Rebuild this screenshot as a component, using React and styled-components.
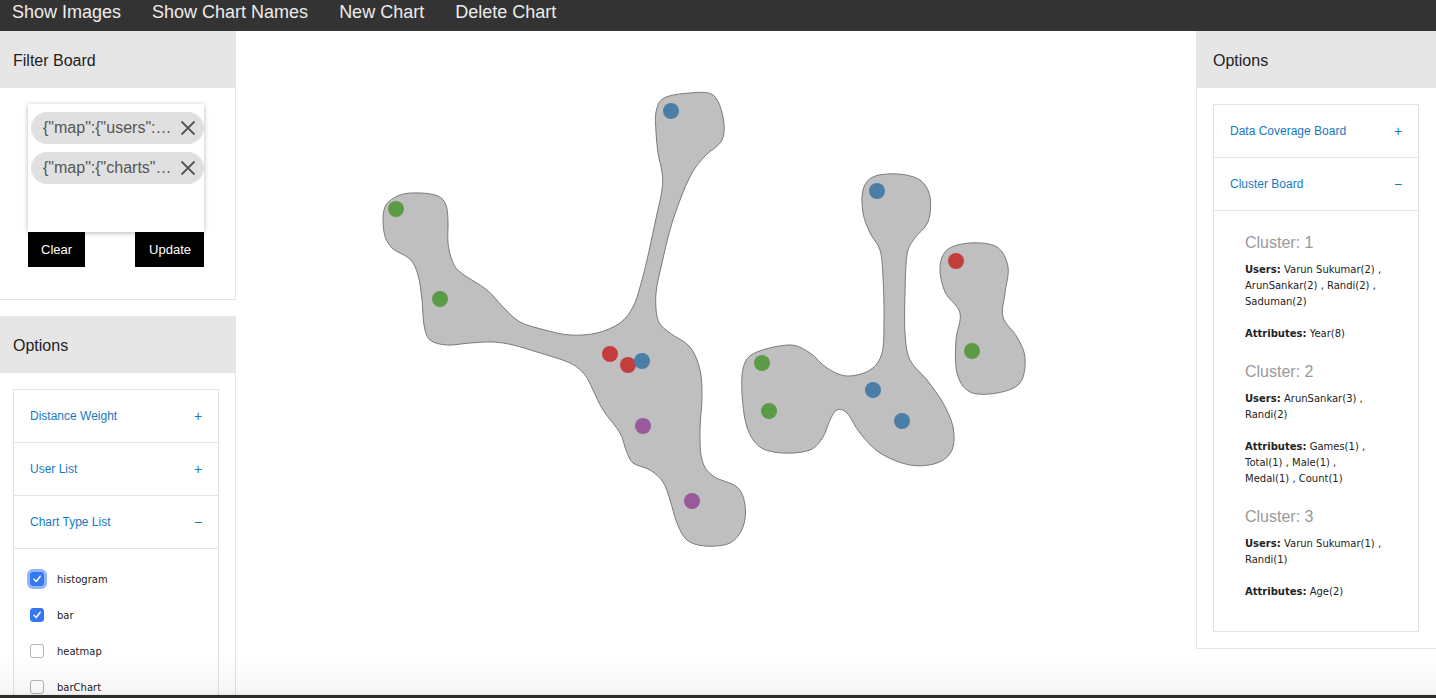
import React from 'react';
import styled, { createGlobalStyle } from 'styled-components';

const GlobalStyle = createGlobalStyle`
  html, body { margin: 0; padding: 0; overflow: hidden; background: #fff; }
  * { box-sizing: border-box; }
`;

const Page = styled.div`
  width: 100%;
  height: 100vh;
  display: flex;
  flex-direction: column;
  overflow: hidden;
  font-family: "Liberation Sans", Arial, sans-serif;
  color: #222;
`;

const NavBar = styled.nav`
  height: 31px;
  flex-shrink: 0;
  background: #333333;
  display: flex;
  align-items: flex-start;
  padding-left: 12px;
  gap: 31px;
`;

const NavItem = styled.a`
  color: #ececec;
  font-size: 18px;
  line-height: 25px;
  cursor: pointer;
`;

const Main = styled.div`
  flex: 1;
  min-height: 0;
  display: grid;
  grid-template-columns: 236px 1fr 240px;
`;

const SidePanel = styled.aside`
  display: flex;
  flex-direction: column;
  gap: 16px;
  min-height: 0;
`;

const Card = styled.section`
  display: flex;
  flex-direction: column;
  flex-shrink: 0;
  ${(p) => (p.$grow ? 'flex: 1; min-height: 0;' : '')}
`;

const CardHeader = styled.div`
  height: 57px;
  flex-shrink: 0;
  background: #e6e6e6;
  display: flex;
  align-items: center;
  padding-top: 2px;
  padding-left: ${(p) => (p.$side === 'right' ? '17px' : '13px')};
  font-size: 16px;
  color: #222;
`;

const CardBody = styled.div`
  background: #fff;
  border-bottom: 1px solid #e4e4e4;
  ${(p) => (p.$side === 'right' ? 'border-left: 1px solid #e4e4e4;' : 'border-right: 1px solid #e4e4e4;')}
  padding: ${(p) => p.$pad};
  ${(p) => (p.$grow ? 'flex: 1; min-height: 0; overflow: hidden;' : '')}
`;

const FilterBox = styled.div`
  height: 128px;
  background: #fff;
  box-shadow: 0 1px 5px rgba(0, 0, 0, 0.28);
  padding: 8px 0 0 3px;
  display: flex;
  flex-direction: column;
  gap: 8px;
`;

const Chip = styled.div`
  height: 32px;
  border-radius: 16px;
  background: #e0e0e0;
  display: flex;
  align-items: center;
  gap: 6px;
  padding: 0 8px 0 12px;
  font-size: 16px;
  color: #555;
`;

const ChipText = styled.span`
  flex: 1;
  min-width: 0;
  overflow: hidden;
  white-space: nowrap;
  text-overflow: ellipsis;
`;

const ChipClose = styled.svg`
  width: 16px;
  height: 16px;
  flex-shrink: 0;
`;

const ButtonRow = styled.div`
  display: flex;
  justify-content: space-between;
`;

const ActionButton = styled.button`
  height: 35px;
  border: none;
  background: #000;
  color: #fff;
  font-family: "Liberation Sans", Arial, sans-serif;
  font-size: 13px;
  padding: 0 13px 0 ${(p) => (p.$wide ? '14px' : '13px')};
  cursor: pointer;
`;

const Accordion = styled.div`
  border: 1px solid #e4e4e4;
`;

const AccordionRow = styled.div`
  height: 53px;
  border-bottom: 1px solid #e4e4e4;
  display: flex;
  align-items: center;
  justify-content: space-between;
  padding: 0 15px 0 16px;
  font-size: 12px;
  color: #1579c4;
  cursor: pointer;
`;

const AccordionSign = styled.span`
  font-size: 14px;
  color: #1579c4;
  width: 10px;
  text-align: center;
`;

const CheckList = styled.div`
  padding: 12px 16px 0;
`;

const CheckRow = styled.label`
  height: 36px;
  display: flex;
  align-items: center;
  gap: 13px;
  font-family: "DejaVu Sans", Verdana, sans-serif;
  font-size: 10px;
  color: #222;
`;

const CheckBox = styled.span`
  width: 14px;
  height: 14px;
  border-radius: 3px;
  flex-shrink: 0;
  display: flex;
  align-items: center;
  justify-content: center;
  background: ${(p) => (p.$checked ? '#3478f6' : '#fff')};
  border: 1px solid ${(p) => (p.$checked ? '#3478f6' : '#b5b5b5')};
  box-shadow: ${(p) => (p.$focus ? '0 0 0 3px rgba(52, 120, 246, 0.55)' : 'none')};
`;

const Canvas = styled.div`
  position: relative;
  background: #fff;
  min-height: 0;
  overflow: hidden;
`;

const ClusterSvg = styled.svg`
  display: block;
  width: 100%;
  height: 100%;
`;

const ClusterContent = styled.div`
  padding: 23px 35px 10px 31px;
`;

const ClusterBlock = styled.div`
  padding-bottom: 5px;
`;

const ClusterTitle = styled.div`
  font-size: 16px;
  line-height: 18px;
  color: #999;
  margin-bottom: 10px;
`;

const ClusterLine = styled.p`
  margin: 0 0 16px;
  font-family: "DejaVu Sans", Verdana, sans-serif;
  font-size: 10px;
  line-height: 16px;
  color: #222;
  b { font-weight: bold; }
`;

const WindowEdge = styled.div`
  position: fixed;
  left: 0;
  right: 0;
  bottom: 0;
  height: 44px;
  pointer-events: none;
  background: linear-gradient(to bottom, rgba(0, 0, 0, 0) 0%, rgba(0, 0, 0, 0.035) 80%, rgba(0, 0, 0, 0.06) 92%, #2b2b27 93%, #2b2b27 100%);
`;

function smoothPath(pts) {
  const n = pts.length;
  let d = `M${pts[0][0]},${pts[0][1]}`;
  for (let i = 0; i < n; i++) {
    const p0 = pts[(i - 1 + n) % n];
    const p1 = pts[i];
    const p2 = pts[(i + 1) % n];
    const p3 = pts[(i + 2) % n];
    const c1 = [p1[0] + (p2[0] - p0[0]) / 6, p1[1] + (p2[1] - p0[1]) / 6];
    const c2 = [p2[0] - (p3[0] - p1[0]) / 6, p2[1] - (p3[1] - p1[1]) / 6];
    d += ` C${c1[0].toFixed(1)},${c1[1].toFixed(1)} ${c2[0].toFixed(1)},${c2[1].toFixed(1)} ${p2[0]},${p2[1]}`;
  }
  return d + ' Z';
}

const blobA = [
  [656, 112], [664, 98], [690, 93], [713, 95], [723, 117], [722, 140], [705, 156], [692, 173], [680, 200],
  [670, 230], [662, 263], [656, 293], [658, 320], [670, 333], [690, 347], [700, 370], [702, 397], [700, 430],
  [702, 460], [713, 476], [737, 487], [745, 505], [743, 527], [730, 543], [705, 546], [687, 540], [677, 523],
  [670, 500], [663, 482], [650, 470], [633, 463], [626, 450], [620, 433], [603, 410], [593, 390], [585, 375],
  [570, 363], [537, 352], [513, 345], [493, 342], [470, 343], [447, 345], [430, 340], [424, 325], [422, 300],
  [418, 275], [410, 259], [392, 248], [384, 232], [385, 207], [400, 195], [420, 193], [438, 196], [446, 205],
  [448, 222], [448, 243], [452, 260], [460, 272], [487, 290], [503, 307], [520, 322], [545, 330], [570, 335],
  [597, 333], [620, 323], [633, 307], [640, 287], [647, 260], [655, 223], [662, 190], [662, 172], [658, 153],
  [656, 132],
];

const blobB = [
  [863, 190], [873, 177], [897, 174], [920, 180], [930, 197], [928, 222], [914, 239], [907, 255], [905, 293],
  [905, 333], [910, 360], [927, 380], [943, 403], [953, 427], [952, 450], [937, 463], [910, 465], [880, 453],
  [860, 433], [847, 413], [837, 410], [830, 420], [823, 437], [810, 450], [783, 453], [760, 447], [747, 427],
  [742, 393], [744, 365], [757, 352], [790, 345], [810, 353], [827, 368], [847, 376], [870, 370], [882, 353],
  [884, 320], [883, 277], [880, 250], [870, 233], [863, 213],
];

const blobC = [
  [940, 268], [947, 250], [970, 243], [997, 247], [1008, 267], [1005, 293], [1003, 317], [1017, 337],
  [1025, 358], [1020, 383], [997, 393], [970, 392], [957, 373], [956, 340], [960, 313], [945, 292],
];

const COLORS = { blue: '#4a7ea6', green: '#5b9b48', red: '#c43d3d', purple: '#985a9b' };

const dots = [
  [671, 111, 'blue'], [396, 209, 'green'], [440, 299, 'green'], [610, 354, 'red'], [628, 365, 'red'],
  [642, 361, 'blue'], [643, 426, 'purple'], [692, 501, 'purple'],
  [877, 191, 'blue'], [762, 363, 'green'], [769, 411, 'green'], [873, 390, 'blue'], [902, 421, 'blue'],
  [956, 261, 'red'], [972, 351, 'green'],
];

const clusters = [
  { id: 1, users: ['Varun Sukumar(2)', 'ArunSankar(2)', 'Randi(2)', 'Saduman(2)'], attrs: ['Year(8)'] },
  { id: 2, users: ['ArunSankar(3)', 'Randi(2)'], attrs: ['Games(1)', 'Total(1)', 'Male(1)', 'Medal(1)', 'Count(1)'] },
  { id: 3, users: ['Varun Sukumar(1)', 'Randi(1)'], attrs: ['Age(2)'] },
];

const chartTypes = [
  { name: 'histogram', checked: true, focus: true },
  { name: 'bar', checked: true },
  { name: 'heatmap', checked: false },
  { name: 'barChart', checked: false },
  { name: 'line', checked: false },
];

function CloseIcon() {
  return (
    <ChipClose viewBox="0 0 16 16">
      <path d="M2 2 L14 14 M14 2 L2 14" stroke="#555" strokeWidth="1.8" strokeLinecap="round" />
    </ChipClose>
  );
}

function Check() {
  return (
    <svg width="10" height="10" viewBox="0 0 10 10">
      <path d="M2 5.3 L4.2 7.5 L8.2 2.2" fill="none" stroke="#fff" strokeWidth="1.5" strokeLinecap="round" strokeLinejoin="round" />
    </svg>
  );
}

export default function App() {
  return (
    <Page>
      <GlobalStyle />
      <NavBar>
        <NavItem>Show Images</NavItem>
        <NavItem>Show Chart Names</NavItem>
        <NavItem>New Chart</NavItem>
        <NavItem>Delete Chart</NavItem>
      </NavBar>
      <Main>
        <SidePanel>
          <Card>
            <CardHeader>Filter Board</CardHeader>
            <CardBody $pad="16px 31px 32px 28px">
              <FilterBox>
                <Chip>
                  <ChipText>{'{"map":{"users":{"Varun Sukumar":true}}}'}</ChipText>
                  <CloseIcon />
                </Chip>
                <Chip>
                  <ChipText>{'{"map":{"charts":{"bar":true}}}'}</ChipText>
                  <CloseIcon />
                </Chip>
              </FilterBox>
              <ButtonRow>
                <ActionButton>Clear</ActionButton>
                <ActionButton $wide>Update</ActionButton>
              </ButtonRow>
            </CardBody>
          </Card>
          <Card $grow>
            <CardHeader>Options</CardHeader>
            <CardBody $grow $pad="16px 16px 0 13px">
              <Accordion>
                <AccordionRow>
                  <span>Distance Weight</span>
                  <AccordionSign>+</AccordionSign>
                </AccordionRow>
                <AccordionRow>
                  <span>User List</span>
                  <AccordionSign>+</AccordionSign>
                </AccordionRow>
                <AccordionRow>
                  <span>Chart Type List</span>
                  <AccordionSign>−</AccordionSign>
                </AccordionRow>
                <CheckList>
                  {chartTypes.map((c) => (
                    <CheckRow key={c.name}>
                      <CheckBox $checked={c.checked} $focus={c.focus}>
                        {c.checked && <Check />}
                      </CheckBox>
                      {c.name}
                    </CheckRow>
                  ))}
                </CheckList>
              </Accordion>
            </CardBody>
          </Card>
        </SidePanel>

        <Canvas>
          <ClusterSvg viewBox="236 31 960 667" preserveAspectRatio="xMinYMin meet">
            {[blobA, blobB, blobC].map((b, i) => (
              <path key={i} d={smoothPath(b)} fill="#bfbfbf" stroke="#7a7a7a" strokeWidth="1" />
            ))}
            {dots.map(([x, y, c], i) => (
              <circle key={i} cx={x} cy={y} r="8" fill={COLORS[c]} />
            ))}
          </ClusterSvg>
        </Canvas>

        <SidePanel>
          <Card>
            <CardHeader $side="right">Options</CardHeader>
            <CardBody $side="right" $pad="16px 17px 16px 16px">
              <Accordion>
                <AccordionRow>
                  <span>Data Coverage Board</span>
                  <AccordionSign>+</AccordionSign>
                </AccordionRow>
                <AccordionRow>
                  <span>Cluster Board</span>
                  <AccordionSign>−</AccordionSign>
                </AccordionRow>
                <ClusterContent>
                  {clusters.map((cl) => (
                    <ClusterBlock key={cl.id}>
                      <ClusterTitle>Cluster: {cl.id}</ClusterTitle>
                      <ClusterLine>
                        <b>Users:</b> {cl.users.join(' , ')}
                      </ClusterLine>
                      <ClusterLine>
                        <b>Attributes:</b> {cl.attrs.join(' , ')}
                      </ClusterLine>
                    </ClusterBlock>
                  ))}
                </ClusterContent>
              </Accordion>
            </CardBody>
          </Card>
        </SidePanel>
      </Main>
      <WindowEdge />
    </Page>
  );
}
